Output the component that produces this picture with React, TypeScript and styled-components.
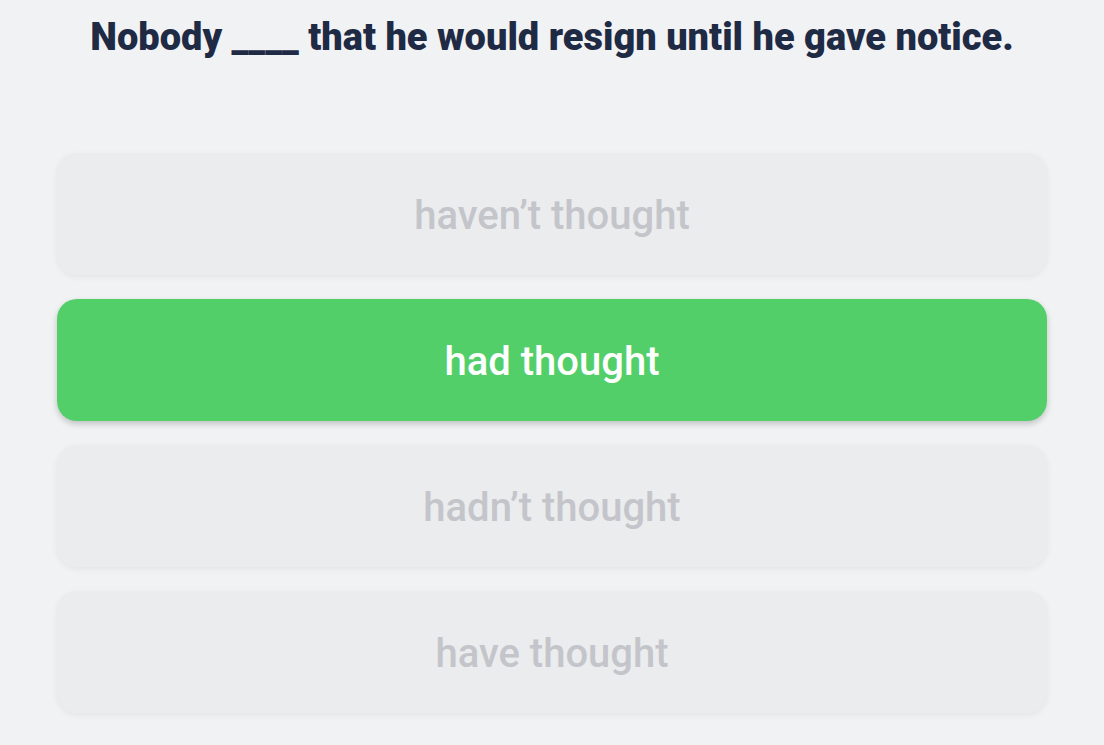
import React from "react";
import styled, { createGlobalStyle } from "styled-components";

const Global = createGlobalStyle`
  html, body { margin: 0; padding: 0; background: #f1f2f4; }
  body { font-family: Roboto, "Noto Sans", sans-serif; }
`;

const Page = styled.div`
  width: 1104px;
  height: 745px;
  box-sizing: border-box;
  display: flex;
  flex-direction: column;
  align-items: center;
  padding-top: 13px;
`;

const Question = styled.h1`
  margin: 0;
  font-size: 38px;
  line-height: 48px;
  font-weight: 900;
  color: #1f2a44;
  letter-spacing: 0;
  text-align: center;
`;

const Options = styled.div`
  align-self: stretch;
  display: flex;
  flex-direction: column;
  gap: 24px;
  padding: 0 57px;
  margin-top: 92px;
`;

const Option = styled.button<{ $selected?: boolean }>`
  height: 122px;
  border: none;
  border-radius: 20px;
  font-family: Roboto, "Noto Sans", sans-serif;
  font-size: 40px;
  font-weight: 500;
  display: flex;
  align-items: center;
  justify-content: center;
  padding: 3px 0 0;
  background: ${(p) => (p.$selected ? "#52cf69" : "#ebecee")};
  color: ${(p) => (p.$selected ? "#ffffff" : "#c4c5ca")};
  box-shadow: ${(p) =>
    p.$selected
      ? "0 3px 6px rgba(0,0,0,0.2)"
      : "0 2px 6px rgba(0,0,0,0.06)"};
`;

const options = ["haven\u2019t thought", "had thought", "hadn\u2019t thought", "have thought"];

export default function App() {
  return (
    <Page>
      <Global />
      <Question>Nobody ____ that he would resign until he gave notice.</Question>
      <Options>
        {options.map((o) => (
          <Option key={o} $selected={o === "had thought"}>
            {o}
          </Option>
        ))}
      </Options>
    </Page>
  );
}
